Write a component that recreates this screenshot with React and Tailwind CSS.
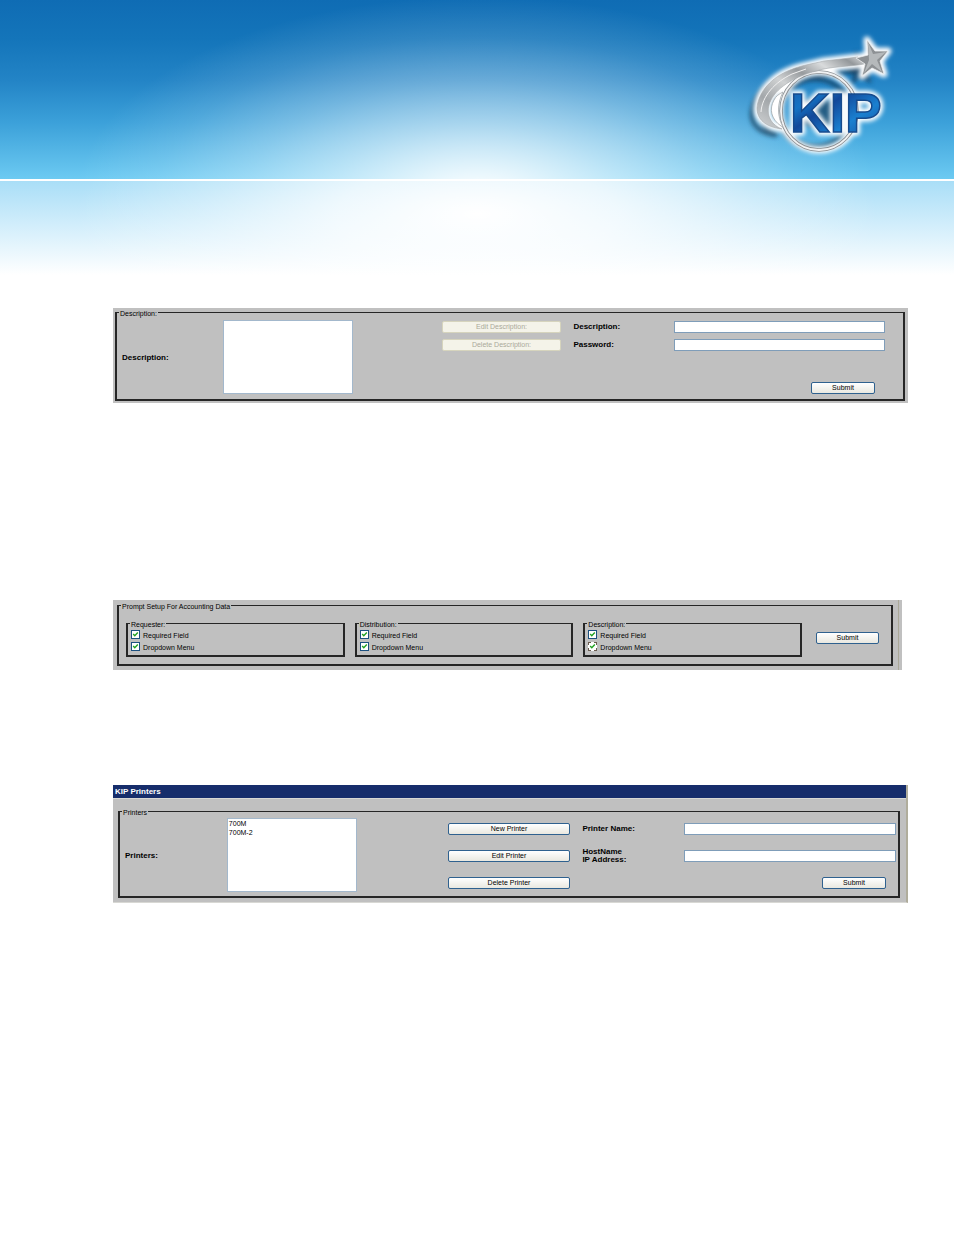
import React from 'react';
import clsx from 'clsx';

const PROMPTS = ['Requester:', 'Distribution:', 'Description:'];
const PRINTERS = ['700M', '700M-2'];

const KipLogo = () => (
  <svg viewBox="0 0 160 130" className="w-40 h-[130px]" role="img" aria-label="KIP">
    <defs>
      <linearGradient id="silver" x1="0" y1="1" x2="1" y2="0">
        <stop offset="0" stopColor="#d4d6d7" />
        <stop offset="0.25" stopColor="#a3a7aa" />
        <stop offset="0.45" stopColor="#d0d2d3" />
        <stop offset="0.6" stopColor="#979b9e" />
        <stop offset="0.75" stopColor="#d9dbdc" />
        <stop offset="0.9" stopColor="#94989b" />
        <stop offset="1" stopColor="#dcdedf" />
      </linearGradient>
      <linearGradient id="blue" x1="0" y1="0" x2="1" y2="1">
        <stop offset="0" stopColor="#1c5eae" />
        <stop offset="0.25" stopColor="#1573c4" />
        <stop offset="0.4" stopColor="#12489a" />
        <stop offset="0.65" stopColor="#1a80d0" />
        <stop offset="1" stopColor="#123f8e" />
      </linearGradient>
      <filter id="soft" x="-20%" y="-20%" width="140%" height="140%">
        <feGaussianBlur stdDeviation="2" />
      </filter>
      <path id="swoosh" d="M42 99C25 97 17 89 17 78C18 62 32 47 50 40C62 35 72 34 84 31L118 27L124 34C108 37 92 36 76 41C57 46 38 56 31 70C25 82 29 94 42 99Z" />
      <path id="star" d="M127 10L135 21L148 21L140 31L144 44L132 38L122 46L125 34L116 28L128 25Z" />
    </defs>

    {/* drop shadow */}
    <g filter="url(#soft)" transform="translate(-5 6)" fill="none" stroke="#12344f" strokeWidth="5" opacity="0.65">
      <use href="#swoosh" />
      <ellipse cx="80" cy="77" rx="36" ry="34" />
    </g>
    <g filter="url(#soft)" fill="#12344f" opacity="0.6">
      <use href="#star" x="-12" y="10" />
      <ellipse cx="78" cy="83" rx="25" ry="14" />
    </g>

    {/* white glow */}
    <g filter="url(#soft)" fill="#fff" stroke="#fff" strokeWidth="7" strokeLinejoin="round">
      <use href="#swoosh" />
      <use href="#star" />
      <ellipse cx="79" cy="81" rx="39" ry="39" fill="none" />
      <text x="50" y="102" fontSize="55" fontWeight="bold" className="font-['Liberation_Sans',sans-serif]">KIP</text>
    </g>

    <ellipse cx="79" cy="81" rx="38" ry="39" fill="none" stroke="#8b9094" strokeWidth="3.5" />
    <ellipse cx="79" cy="81" rx="38" ry="39" fill="none" stroke="#f1f2f3" strokeWidth="1.8" />
    <use href="#swoosh" fill="url(#silver)" stroke="#a5a9ac" strokeWidth="0.6" />
    <path d="M41 96C31 89 29 79 34 70C36 66 39 64 43 62C37 74 37 86 43 97Z" fill="#fff" stroke="#a5a9ac" strokeWidth="0.8" />
    <path d="M21 82C22 66 35 52 52 44L66 39" fill="none" stroke="#f0f0f0" strokeWidth="1" />
    <use href="#star" fill="#8d9194" stroke="#eceeef" strokeWidth="0.8" />
    <path d="M128 12L133 24L146 22L137 30L142 42L132 34L124 43L129 30Z" fill="#b5b9bb" />
    <text x="50" y="102" fontSize="55" fontWeight="bold" fill="url(#blue)" stroke="#174b8d" strokeWidth="1.5" className="font-['Liberation_Sans',sans-serif]">KIP</text>
  </svg>
);

const Button = ({ className, ...props }) => (
  <button
    type="button"
    className={clsx(
      'h-3 rounded-[2px] border border-[#2f618f] bg-linear-to-b from-white to-[#e9e8e0] text-center text-[7px] leading-[10px] text-black',
      'disabled:border-[#d6d4bd] disabled:bg-none disabled:bg-[#f4f3e9] disabled:text-[#aaa99a]',
      className
    )}
    {...props}
  />
);

const TextField = (props) => (
  <input className="h-3 w-full min-w-0 border border-[#7f9db9] bg-white px-1 text-[7px] outline-none" {...props} />
);

const ListBox = ({ id, items }) => (
  <select id={id} multiple className="h-[74px] w-[130px] overflow-hidden border border-[#a3b8cc] bg-white px-px py-px text-[7px]">
    {items.map((item) => (
      <option key={item} className="h-[9px] min-h-0 p-0 text-[7px] leading-[9px]">{item}</option>
    ))}
  </select>
);

const Group = ({ title, className, children }) => (
  <fieldset className="min-w-0 border-2 border-t border-[#262626]">
    <legend className="ml-0.5 px-px pt-0.5 text-[7px] leading-[7px]">{title}</legend>
    <div className={className}>{children}</div>
  </fieldset>
);

const Check = ({ label, focused }) => (
  <label className="flex h-3 items-center gap-[3px] text-[7px] leading-[9px]">
    <span className="grid size-[9px]">
      <input
        type="checkbox"
        defaultChecked
        className={clsx(
          'peer col-start-1 row-start-1 size-[9px] appearance-none border bg-white',
          focused ? 'border-dashed border-[#6b5d50]' : 'border-[#1c5180]'
        )}
      />
      <svg viewBox="0 0 9 9" className="pointer-events-none invisible col-start-1 row-start-1 size-[9px] peer-checked:visible">
        <path d="M2.2 4L3.8 5.8L6.8 2.6" fill="none" stroke="#21a121" strokeWidth="1.4" />
      </svg>
    </span>
    <span className="pt-0.5">{label}</span>
  </label>
);

const DescriptionPanel = () => (
  <form className="bg-[#c0c0c0] pr-[3px] pb-0.5 pl-0.5">
    <Group title="Description:" className="pb-[5px] pl-[5px]">
      <div className="grid grid-cols-[101fr_219fr_132fr_101fr_229fr] pt-[3px]">
        <label htmlFor="description-list" className="self-center text-[8px] leading-[9px] font-bold">Description:</label>
        <ListBox id="description-list" items={[]} />
        <div className="flex flex-col gap-1.5 pt-px pr-3">
          <Button disabled>Edit Description:</Button>
          <Button disabled>Delete Description:</Button>
        </div>
        <div className="flex flex-col gap-1.5 pt-px text-[8px] leading-3 font-bold">
          <label htmlFor="description">Description:</label>
          <label htmlFor="password">Password:</label>
        </div>
        <div className="flex flex-col gap-1.5 pt-px pr-[18px]">
          <TextField id="description" type="text" />
          <TextField id="password" type="password" />
          <Button className="mt-auto mr-2.5 w-16 self-end">Submit</Button>
        </div>
      </div>
    </Group>
  </form>
);

const PromptPanel = () => (
  <form className="mr-1.5 bg-[#c0c0c0] pr-[3px]">
    <div className="border-r border-[#aaa898] pt-px pr-[5px] pb-1 pl-1">
      <Group title="Prompt Setup For Accounting Data" className="pt-[9px] pr-3 pb-[7px] pl-[7px]">
        <div className="flex items-center gap-3.5">
          <div className="grid flex-1 grid-cols-3 gap-2.5">
            {PROMPTS.map((title, i) => (
              <Group key={title} title={title} className="pb-[3px] pl-[3px]">
                <Check label="Required Field" />
                <Check label="Dropdown Menu" focused={i === 2} />
              </Group>
            ))}
          </div>
          <Button className="w-[63px]">Submit</Button>
        </div>
      </Group>
    </div>
  </form>
);

const PrintersPanel = () => (
  <section className="border-r-2 border-b border-r-[#b0ad9c] border-b-[#d8d8d4] bg-[#c0c0c0]">
    <h2 className="border-b border-[#d8d8d4] bg-[#162d6b] pl-0.5 text-[8px] leading-[13px] font-bold text-white">KIP Printers</h2>
    <form className="pt-2 pr-1.5 pb-1 pl-[5px]">
      <Group title="Printers" className="pr-0.5 pb-1 pl-[5px]">
        <div className="grid grid-cols-[102fr_221fr_449fr] pt-0.5">
          <label htmlFor="printer-list" className="self-center text-[8px] leading-[9px] font-bold">Printers:</label>
          <ListBox id="printer-list" items={PRINTERS} />
          <div className="grid grid-cols-[135fr_102fr_212fr] content-start gap-y-[15px] pt-[5px] text-[8px] leading-3 font-bold">
            <Button className="mr-3 font-normal">New Printer</Button>
            <label htmlFor="printer-name">Printer Name:</label>
            <TextField id="printer-name" type="text" />
            <Button className="mr-3 font-normal">Edit Printer</Button>
            <label htmlFor="host" className="-my-0.5 leading-2">HostName<br />IP Address:</label>
            <TextField id="host" type="text" />
            <Button className="mr-3 font-normal">Delete Printer</Button>
            <Button className="col-start-3 mr-2.5 w-16 justify-self-end font-normal">Submit</Button>
          </div>
        </div>
      </Group>
    </form>
  </section>
);

const App = () => (
  <div className="min-h-screen bg-white font-['Liberation_Sans',Arial,sans-serif] text-black">
    <header>
      <div className="flex h-[179px] justify-end bg-[radial-gradient(ellipse_42%_112%_at_50%_110%,rgba(255,255,255,1)_0%,rgba(255,255,255,0.78)_18%,rgba(255,255,255,0.56)_36%,rgba(255,255,255,0.32)_58%,rgba(255,255,255,0.12)_80%,rgba(255,255,255,0)_100%),linear-gradient(to_bottom,#0f6cb4_0%,#1475ba_22%,#2384c6_45%,#3ba0d9_68%,#6ccaf2_100%)] pt-[30px] pr-[54px]">
        <KipLogo />
      </div>
      <div className="h-0.5 bg-white" />
      <div className="h-[94px] bg-[radial-gradient(ellipse_42%_150%_at_50%_35%,rgba(255,255,255,1)_0%,rgba(255,255,255,0.75)_35%,rgba(255,255,255,0.3)_70%,rgba(255,255,255,0)_100%),linear-gradient(to_bottom,#a9def7_0%,#d0edfb_45%,#ffffff_100%)]" />
    </header>

    <main className="pt-[33px] pr-[46px] pb-20 pl-[113px]">
      <DescriptionPanel />
      <div className="mt-[197px]">
        <PromptPanel />
      </div>
      <div className="mt-[115px]">
        <PrintersPanel />
      </div>
    </main>
  </div>
);

export default App;
